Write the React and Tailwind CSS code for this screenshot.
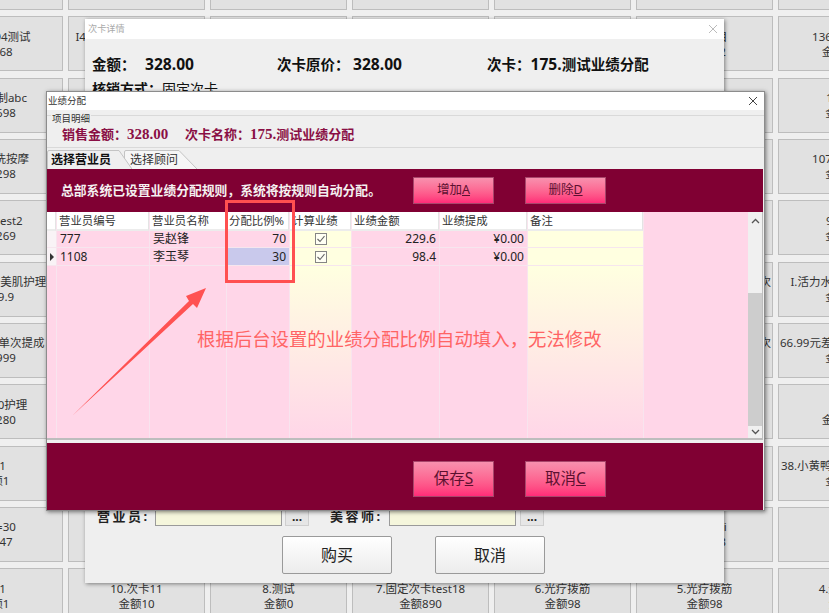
import React from "react";

const font = "[font-family:'Noto_Sans','Noto_Sans_CJK_SC',sans-serif]";
const serif = "[font-family:'Liberation_Serif','Noto_Sans_CJK_SC',serif]";

const cards = [
  ["", ""], ["", ""], ["", ""], ["", ""], ["", ""], ["", ""], ["", ""],
  ["110.1194测试", "金额68"], ["I44测试次卡项目名称11", "金额0"], ["", ""], ["", ""], ["", ""], ["测试项目", "金额112"], ["136.测试次卡", "金额1000"],
  ["123.控制abc", "金额698"], ["", ""], ["", ""], ["", ""], ["", ""], ["", ""], ["1次卡项", "金额199"],
  ["111.精洗按摩", "金额298"], ["", ""], ["", ""], ["", ""], ["", ""], ["", ""], ["107.测试次卡", "金额199"],
  ["1234.test2", "金额269"], ["", ""], ["", ""], ["", ""], ["", ""], ["", ""], ["9次卡项", "金额199"],
  ["123.玫瑰天美肌护理", "金额9.9"], ["", ""], ["", ""], ["", ""], ["", ""], ["1测试次卡测试次卡测试次", ""], ["I.活力水光精华护理12", "金额199"],
  ["1166.99元单次提成", "金额999"], ["", ""], ["", ""], ["", ""], ["", ""], ["1测试次卡测试次卡测试次", ""], ["66.99元差价次卡测试项目", "金额199"],
  ["1110.20护理", "金额280"], ["", ""], ["", ""], ["", ""], ["", ""], ["", ""], ["", "金额1999"],
  ["12.1", "金额1"], ["", ""], ["", ""], ["", ""], ["", ""], ["", ""], ["38.小黄鸭精油护理套餐卡", "金额199"],
  ["次卡=30", "金额47"], ["", ""], ["", ""], ["", ""], ["", ""], ["测试项hi", "金额888"], ["", ""],
  ["12.1", "金额1"], ["10.次卡11", "金额10"], ["8.测试", "金额0"], ["7.固定次卡test18", "金额890"], ["6.光疗拨筋", "金额98"], ["5.光疗拨筋", "金额98"], ["4.光疗拨筋", "金额98"],
];

const columns = [
  { key: "mark", width: "w-[10px]", title: "", cells: ["", ""] },
  { key: "no", width: "w-[93px]", title: "营业员编号", cells: ["777", "1108"] },
  { key: "name", width: "w-[77px]", title: "营业员名称", cells: ["吴赵锋", "李玉琴"] },
  { key: "ratio", width: "w-[63px]", title: "分配比例%", cells: ["70", "30"], right: true },
  { key: "calc", width: "w-[62px]", title: "计算业绩", cells: ["check", "check"], yellow: true },
  { key: "amount", width: "w-[88px]", title: "业绩金额", cells: ["229.6", "98.4"], right: true },
  { key: "bonus", width: "w-[88px]", title: "业绩提成", cells: ["¥0.00", "¥0.00"], right: true },
  { key: "note", width: "w-[116px]", title: "备注", cells: ["", ""], yellow: true },
];

const CheckBox = () => (
  <svg width="12" height="12" viewBox="0 0 12 12" className="block">
    <rect x="0.5" y="0.5" width="11" height="11" fill="#fffff4" stroke="#858585" />
    <path d="M2.5 6 L5 8.5 L9.5 3.2" fill="none" stroke="#666" strokeWidth="1.1" />
  </svg>
);

const PinkButton = ({ label, hot, tall }) => (
  <button
    className={`w-[81px] ${tall ? "h-[36px] text-[15.5px]" : "h-[27px] text-[12.5px]"} border border-[#a8466b] bg-gradient-to-b from-[#f790ae] to-[#ff2a78] text-[#5c1030] ${font}`}
  >
    {label}
    <u>{hot}</u>
  </button>
);

const Tab = ({ label, active, width, path, className, labelClass }) => (
  <div className={`relative h-[19px] ${width} ${className}`}>
    <svg className="absolute inset-0 h-full w-full" viewBox={active ? "0 0 85 19" : "0 0 74 19"} preserveAspectRatio="none">
      <path d={path} fill={active ? "#efefef" : "#f6f6f6"} stroke="#c4c4c4" />
    </svg>
    <span className={`relative block pt-[1px] text-[12px] leading-[18px] ${labelClass} ${active ? "font-bold text-[#111]" : "text-[#333]"} ${font}`}>
      {label}
    </span>
  </div>
);

const GridCell = ({ col, value, rowIndex }) => {
  const selected = col.key === "ratio" && rowIndex === 1;
  return (
    <div
      className={`flex h-[17.5px] items-center border-b border-[#f6e6ee] px-[3px] pt-[1px] text-[12px] text-[#222] ${col.right ? "justify-end" : ""} ${col.key === "calc" ? "justify-center" : ""} ${col.key === "mark" ? "bg-[#f9f3f6] justify-center !px-0" : ""} ${selected ? "bg-[#c9c9ec]" : ""}`}
    >
      {value === "check" ? <CheckBox /> : value}
      {col.key === "mark" && rowIndex === 1 && (
        <span className="h-0 w-0 border-y-[4px] border-l-[4px] border-y-transparent border-l-[#333]" />
      )}
    </div>
  );
};

const App = () => {
  return (
    <div className={`relative h-[613px] w-[829px] overflow-hidden bg-[#efefef] ${font}`}>
      {/* 背景卡片 */}
      <div className="ml-[-74px] mt-[-45px] grid w-[1100px] grid-cols-[repeat(7,137px)] gap-x-[5px] gap-y-[6.33px]">
        {cards.map(([name, price], index) => (
          <div
            key={index}
            className="flex h-[55px] flex-col items-center justify-center overflow-hidden border border-[#bdbdbd] bg-[#e1e1e1] text-center text-[11.5px] leading-[15px] text-[#333]"
          >
            <span className="min-h-[15px] whitespace-nowrap">{name}</span>
            <span className="min-h-[15px] whitespace-nowrap">{price}</span>
          </div>
        ))}
      </div>

      {/* 次卡详情 */}
      <div className="absolute left-[85px] top-[19px] flex h-[564px] w-[639px] flex-col bg-[#efefef] shadow-[1px_1px_4px_rgba(0,0,0,0.45)]">
        <div className="flex h-[20px] shrink-0 items-center justify-between bg-white pl-[3px] pr-[6px] text-[9.2px] text-[#aaa]">
          <span>次卡详情</span>
          <svg width="10" height="10" viewBox="0 0 10 10">
            <path d="M1 1 L9 9 M9 1 L1 9" stroke="#bbb" strokeWidth="1" />
          </svg>
        </div>
        <div className="mt-[15px] flex pl-[7px] text-[14.5px] font-bold leading-[20px] text-[#111]">
          <span className="w-[53px]">金额：</span>
          <span className="w-[132px] text-[15.6px]">328.00</span>
          <span className="w-[76px]">次卡原价：</span>
          <span className="w-[134px] text-[15.6px]">328.00</span>
          <span>次卡：<span className="text-[15.6px]">175.</span>测试业绩分配</span>
        </div>
        <div className="mt-[5px] flex pl-[7px] text-[14px] leading-[20px] text-[#111]">
          <span className="font-bold">核销方式：</span>
          <span>固定次卡</span>
        </div>
        <div className="mt-auto flex h-[19px] items-center pl-[12px] text-[13px] font-bold leading-[19px] text-[#222]">
          <span className="w-[58px] tracking-[2.5px]">营业员:</span>
          <div className="h-[19px] w-[127px] border border-[#9a9a9a] bg-[#f5f6dc]" />
          <div className="ml-[3px] flex h-[19px] w-[24px] items-center justify-center border border-[#cfcfcf] bg-[#e6e6e6] text-[12px] font-bold text-[#222]">...</div>
          <span className="ml-[21px] w-[59px] tracking-[2.5px]">美容师:</span>
          <div className="h-[19px] w-[127px] border border-[#9a9a9a] bg-[#f5f6dc]" />
          <div className="ml-[4px] flex h-[19px] w-[24px] items-center justify-center border border-[#cfcfcf] bg-[#e6e6e6] text-[12px] font-bold text-[#222]">...</div>
        </div>
        <div className="mb-[9px] ml-[197px] mt-[10px] flex gap-[43px]">
          <button className="h-[38px] w-[110px] rounded-[2px] border border-[#9a9a9a] bg-gradient-to-b from-white to-[#ececec] text-[16px] text-[#222]">购买</button>
          <button className="h-[38px] w-[110px] rounded-[2px] border border-[#9a9a9a] bg-gradient-to-b from-white to-[#ececec] text-[16px] text-[#222]">取消</button>
        </div>
      </div>

      {/* 业绩分配 */}
      <div className="absolute left-[46px] top-[91px] flex h-[420px] w-[719px] flex-col border border-[#8c8c8c] bg-[#efefef] shadow-[1px_1px_4px_rgba(0,0,0,0.5)]">
        <div className="flex h-[18px] shrink-0 items-center justify-between bg-white pl-[1px] pr-[6px] text-[9.5px] text-[#333]">
          <span>业绩分配</span>
          <svg width="10" height="10" viewBox="0 0 10 10">
            <path d="M1 1 L9 9 M9 1 L1 9" stroke="#444" strokeWidth="1" />
          </svg>
        </div>
        <div className="relative mt-[5px] h-[33px] shrink-0 border-y border-[#d9d9d9]">
          <span className="absolute left-[4px] top-[-4px] bg-[#efefef] px-[1px] text-[9.5px] leading-[13px] text-[#333]">项目明细</span>
          <div className={`flex pl-[15px] pt-[9px] text-[13px] font-bold leading-[18px] text-[#8a0f45] ${serif}`}>
            <span className="w-[123px]">销售金额：<span className="text-[15px]">328.00</span></span>
            <span>次卡名称：<span className="text-[15px]">175.</span>测试业绩分配</span>
          </div>
        </div>
        <div className="mt-[2px] flex shrink-0">
          <Tab active label="选择营业员" labelClass="pl-[4px]" width="w-[85px]" className="z-10" path="M0.5 19 L0.5 2 Q0.5 0.5 2 0.5 L72 0.5 L85 19" />
          <Tab label="选择顾问" labelClass="pl-[6px]" width="w-[74px]" className="ml-[-8px]" path="M0.5 19 L0.5 2 Q0.5 0.5 2 0.5 L55 0.5 L73 19" />
        </div>
        <div className="mr-[1px] flex h-[43px] shrink-0 items-center bg-[#800033] pl-[14px]">
          <span className="w-[352px] text-[12.8px] font-bold text-[#f4f0f0]">总部系统已设置业绩分配规则，系统将按规则自动分配。</span>
          <PinkButton label="增加" hot="A" />
          <div className="w-[31px]" />
          <PinkButton label="删除" hot="D" />
        </div>
        <div className="mr-[1px] flex h-[228px] shrink-0 border-b-2 border-r border-[#bdbdbd] bg-[#ffd6e8]">
          {columns.map((col) => (
            <div
              key={col.key}
              className={`flex flex-col border-r border-[#f8e4ee] ${col.width} ${col.yellow ? "bg-gradient-to-b from-[#ffffe0] from-[25%] to-[#ffd6e8]" : ""}`}
            >
              <div className="flex h-[18.5px] shrink-0 items-center overflow-hidden whitespace-nowrap border-b-2 border-r border-b-[#ececec] border-r-[#e4e4e4] bg-white pl-[2px] pt-[1px] text-[11.4px] text-[#333]">
                {col.title}
              </div>
              {col.cells.map((value, rowIndex) => (
                <GridCell key={rowIndex} col={col} value={value} rowIndex={rowIndex} />
              ))}
            </div>
          ))}
          <div className="flex-1" />
          <div className="flex w-[14px] flex-col items-center bg-[#f0f0f0] text-[#555]">
            <svg width="9" height="6" viewBox="0 0 9 6" className="mt-[6px] shrink-0">
              <path d="M1 5 L4.5 1.5 L8 5" fill="none" stroke="#555" strokeWidth="1.3" />
            </svg>
            <div className="mt-[69px] h-[133px] w-full shrink-0 bg-[#cdcdcd]" />
            <svg width="9" height="6" viewBox="0 0 9 6" className="mt-[3px] shrink-0">
              <path d="M1 1 L4.5 4.5 L8 1" fill="none" stroke="#555" strokeWidth="1.3" />
            </svg>
          </div>
        </div>
        <div className="mr-[1px] mt-[3px] flex flex-1 items-start bg-[#800033] pl-[366px] pt-[18px]">
          <PinkButton tall label="保存" hot="S" />
          <div className="w-[31px]" />
          <PinkButton tall label="取消" hot="C" />
        </div>
      </div>

      {/* 标注 */}
      <div className="absolute left-[225px] top-[200px] h-[83px] w-[70px] border-[3px] border-[#ff5050]" />
      <span className="absolute left-[197px] top-[326px] whitespace-nowrap text-[18.4px] leading-[26px] text-[#ff6464]">
        根据后台设置的业绩分配比例自动填入，无法修改
      </span>
      <svg className="absolute left-[60px] top-[280px]" width="160" height="145" viewBox="0 0 160 145">
        <polygon points="12,136 129,21 126,16 146,8 137,28 133,24" fill="#ff5252" />
      </svg>
    </div>
  );
};

export default App;
